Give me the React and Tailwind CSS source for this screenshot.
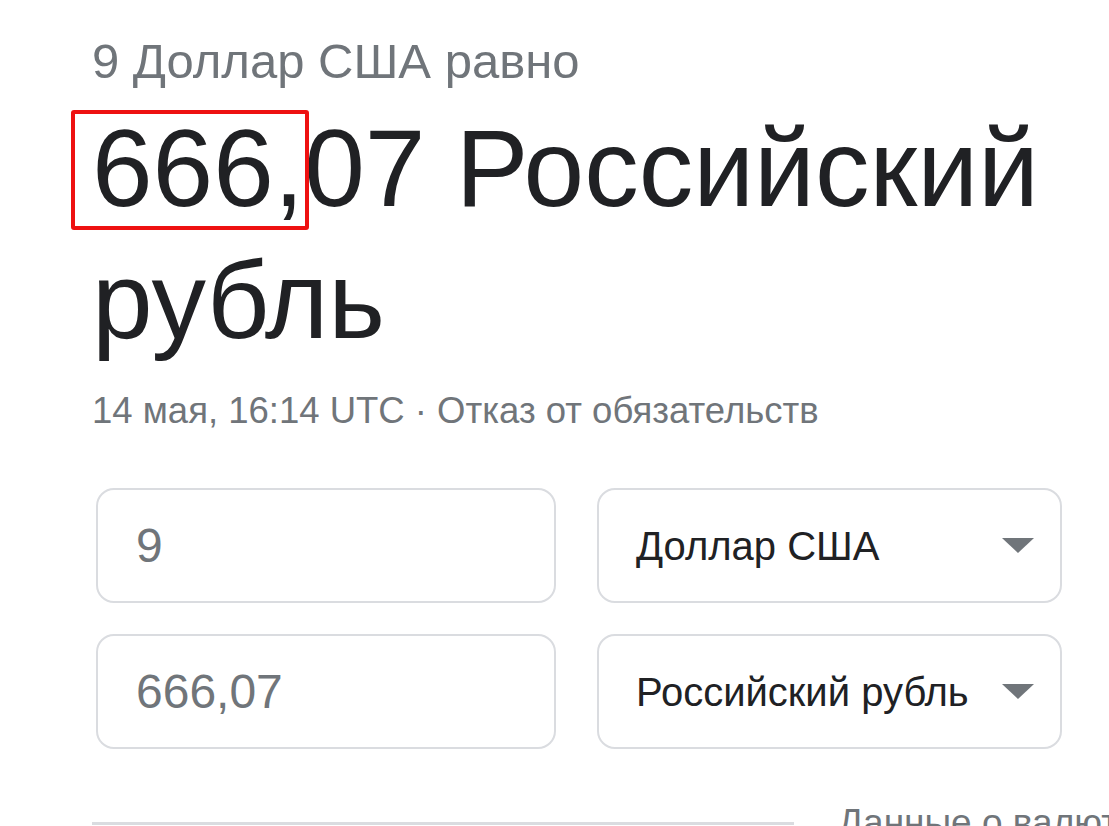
import { useState } from 'react';

const font = { fontFamily: '"Liberation Sans", Arial, sans-serif' };

function Caret() {
  return (
    <svg width="32" height="15" viewBox="0 0 32 15" className="shrink-0">
      <path d="M0 0 L32 0 L16 15 Z" fill="#70757a" />
    </svg>
  );
}

function AmountBox({ value }) {
  return (
    <div className="flex h-[115px] w-[460px] shrink-0 items-center rounded-[18px] border-2 border-[#dadce0] bg-white pl-[38px]">
      <span className="text-[48px] leading-[56px] text-[#70757a]">{value}</span>
    </div>
  );
}

function CurrencyBox({ label }) {
  return (
    <div className="flex h-[115px] w-[465px] shrink-0 items-center justify-between rounded-[18px] border-2 border-[#dadce0] bg-white pl-[37px] pr-[26px]">
      <span className="text-[40px] leading-[48px] text-[#202124]">{label}</span>
      <Caret />
    </div>
  );
}

export default function App() {
  const [rows] = useState([
    { amount: '9', currency: 'Доллар США' },
    { amount: '666,07', currency: 'Российский рубль' },
  ]);

  return (
    <div className="h-[826px] w-full overflow-hidden bg-white" style={font}>
      <div className="pl-[92px] pr-[40px]">
        {/* Question line */}
        <div className="mt-[33px] text-[49px] leading-[56px] text-[#70757a]">9 Доллар США равно</div>

        {/* Result */}
        <div className="mt-[13px] text-[109px] leading-[132px] text-[#202124]">
          <span className="relative">
            666,
            <span className="absolute -left-[21px] -right-[5px] top-[3px] -bottom-[1px] rounded-[3px] border-4 border-[#ee1111]" />
          </span>
          07 Российский рубль
        </div>

        {/* Timestamp */}
        <div className="mt-[25px] text-[36.5px] leading-[40px] text-[#70757a]">
          14 мая, 16:14 UTC · Отказ от обязательств
        </div>

        {/* Converter */}
        <div className="mt-[57px] flex flex-col gap-[31px] pl-[4px]">
          {rows.map((r) => (
            <div key={r.currency} className="flex gap-[41px]">
              <AmountBox value={r.amount} />
              <CurrencyBox label={r.currency} />
            </div>
          ))}
        </div>

        {/* Footer */}
        <div className="mt-[52px] flex items-start gap-[44px]">
          <div className="mt-[21px] h-[3px] w-[702px] shrink-0 bg-[#dadce0]" />
          <span className="whitespace-nowrap text-[37px] leading-[44px] text-[#70757a]">Данные о валютах</span>
        </div>
      </div>
    </div>
  );
}
